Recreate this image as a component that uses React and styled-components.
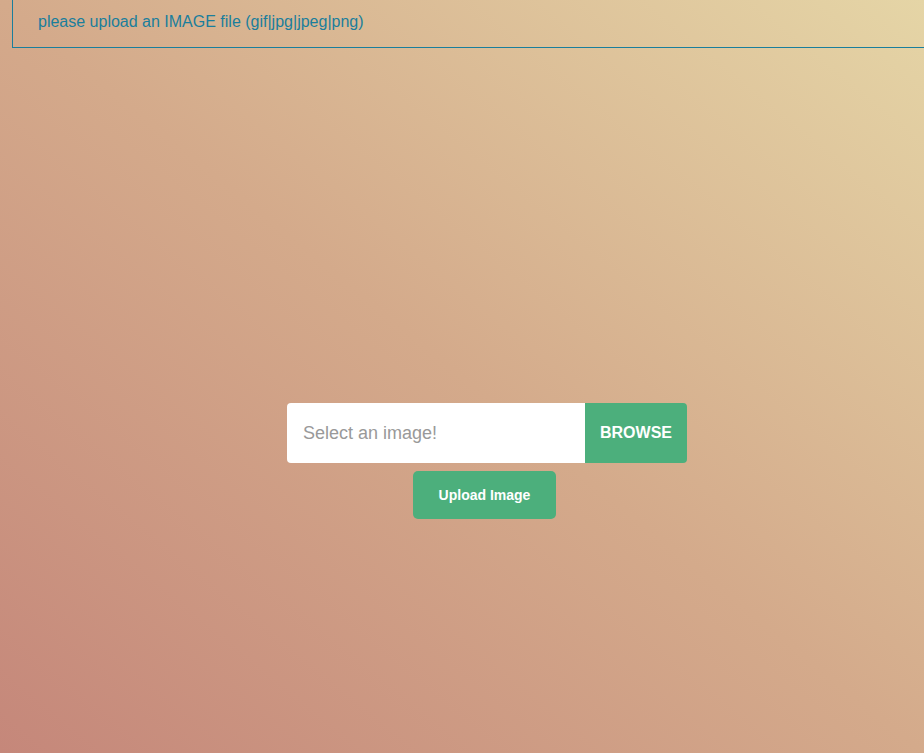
import React from "react";
import styled, { createGlobalStyle } from "styled-components";

const Global = createGlobalStyle`
  html, body { margin: 0; padding: 0; height: 100%; }
  body {
    font-family: "Liberation Sans", Arial, sans-serif;
    background: linear-gradient(to top right, #c5877a 0%, #d4aa8b 50%, #e5d5a6 100%);
    background-attachment: fixed;
    min-height: 100vh;
  }
  #root { min-height: 100vh; }
`;

const Page = styled.div`
  min-height: 753px;
  display: flex;
  flex-direction: column;
`;

const Notice = styled.div`
  margin-left: 12px;
  height: 48px;
  border-left: 1px solid #1a7e9c;
  border-bottom: 1px solid #1a7e9c;
  padding-left: 25px;
  display: flex;
  align-items: center;
  color: #1a7e9c;
  font-size: 16px;
  padding-bottom: 4px;
  box-sizing: border-box;
`;

const Main = styled.main`
  padding-top: 355px;
  padding-left: 50px;
  display: flex;
  flex-direction: column;
  align-items: center;
  gap: 8px;
`;

const InputGroup = styled.div`
  display: flex;
  width: 400px;
  height: 60px;
  border-radius: 4px;
  overflow: hidden;
`;

const FileField = styled.div`
  flex: 1;
  background: #fff;
  display: flex;
  align-items: center;
  padding-left: 16px;
  padding-top: 1px;
  color: #999;
  font-size: 18px;
`;

const Browse = styled.button`
  width: 102px;
  border: none;
  background: #4caf7c;
  color: #fff;
  font-family: inherit;
  font-weight: bold;
  font-size: 16px;
  cursor: pointer;
`;

const UploadButton = styled.button`
  width: 143px;
  height: 48px;
  border: none;
  border-radius: 5px;
  background: #4caf7c;
  color: #fff;
  font-family: inherit;
  font-weight: bold;
  font-size: 14px;
  margin-right: 5px;
  cursor: pointer;
`;

export default function App() {
  return (
    <Page>
      <Global />
      <Notice>please upload an IMAGE file (gif|jpg|jpeg|png)</Notice>
      <Main>
        <InputGroup>
          <FileField>Select an image!</FileField>
          <Browse>BROWSE</Browse>
        </InputGroup>
        <UploadButton>Upload Image</UploadButton>
      </Main>
    </Page>
  );
}
